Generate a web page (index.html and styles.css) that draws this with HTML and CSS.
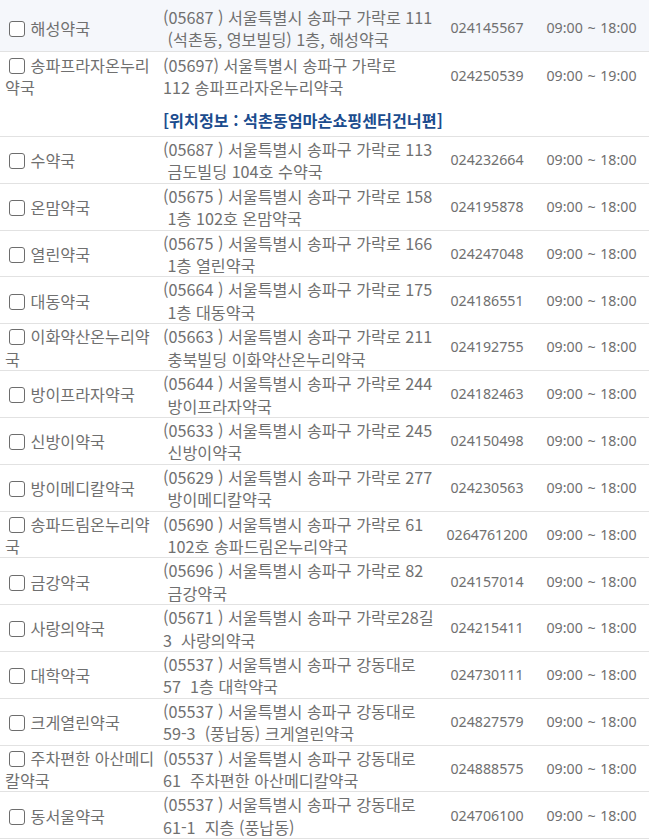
FILE: index.html
```html
<!DOCTYPE html>
<html lang="ko">
<head>
<meta charset="utf-8">
<title>약국 목록</title>
<link rel="stylesheet" href="styles.css">
</head>
<body>
<table class="list">
  <colgroup>
    <col class="c-name"><col class="c-addr"><col class="c-tel"><col class="c-time">
  </colgroup>
  <tbody>
    <tr class="row first">
      <td class="name"><input type="checkbox" class="chk"> 해성약국</td>
      <td class="addr">(05687 ) 서울특별시 송파구 가락로 111<br>&nbsp;(석촌동, 영보빌딩) 1층, 해성약국</td>
      <td class="tel">024145567</td>
      <td class="time">09:00 ~ 18:00</td>
    </tr>
    <tr class="row second">
      <td class="name"><input type="checkbox" class="chk"> 송파프라자온누리<br>약국</td>
      <td class="addr">(05697) 서울특별시 송파구 가락로<br>112 송파프라자온누리약국</td>
      <td class="tel">024250539</td>
      <td class="time">09:00 ~ 19:00</td>
    </tr>
    <tr class="row loc">
      <td></td>
      <td class="locinfo" colspan="3">[위치정보 : 석촌동엄마손쇼핑센터건너편]</td>
    </tr>
    <tr class="row">
      <td class="name"><input type="checkbox" class="chk"> 수약국</td>
      <td class="addr">(05687 ) 서울특별시 송파구 가락로 113<br>&nbsp;금도빌딩 104호 수약국</td>
      <td class="tel">024232664</td>
      <td class="time">09:00 ~ 18:00</td>
    </tr>
    <tr class="row">
      <td class="name"><input type="checkbox" class="chk"> 온맘약국</td>
      <td class="addr">(05675 ) 서울특별시 송파구 가락로 158<br>&nbsp;1층 102호 온맘약국</td>
      <td class="tel">024195878</td>
      <td class="time">09:00 ~ 18:00</td>
    </tr>
    <tr class="row">
      <td class="name"><input type="checkbox" class="chk"> 열린약국</td>
      <td class="addr">(05675 ) 서울특별시 송파구 가락로 166<br>&nbsp;1층 열린약국</td>
      <td class="tel">024247048</td>
      <td class="time">09:00 ~ 18:00</td>
    </tr>
    <tr class="row">
      <td class="name"><input type="checkbox" class="chk"> 대동약국</td>
      <td class="addr">(05664 ) 서울특별시 송파구 가락로 175<br>&nbsp;1층 대동약국</td>
      <td class="tel">024186551</td>
      <td class="time">09:00 ~ 18:00</td>
    </tr>
    <tr class="row">
      <td class="name"><input type="checkbox" class="chk"> 이화약산온누리약<br>국</td>
      <td class="addr">(05663 ) 서울특별시 송파구 가락로 211<br>&nbsp;충북빌딩 이화약산온누리약국</td>
      <td class="tel">024192755</td>
      <td class="time">09:00 ~ 18:00</td>
    </tr>
    <tr class="row">
      <td class="name"><input type="checkbox" class="chk"> 방이프라자약국</td>
      <td class="addr">(05644 ) 서울특별시 송파구 가락로 244<br>&nbsp;방이프라자약국</td>
      <td class="tel">024182463</td>
      <td class="time">09:00 ~ 18:00</td>
    </tr>
    <tr class="row">
      <td class="name"><input type="checkbox" class="chk"> 신방이약국</td>
      <td class="addr">(05633 ) 서울특별시 송파구 가락로 245<br>&nbsp;신방이약국</td>
      <td class="tel">024150498</td>
      <td class="time">09:00 ~ 18:00</td>
    </tr>
    <tr class="row">
      <td class="name"><input type="checkbox" class="chk"> 방이메디칼약국</td>
      <td class="addr">(05629 ) 서울특별시 송파구 가락로 277<br>&nbsp;방이메디칼약국</td>
      <td class="tel">024230563</td>
      <td class="time">09:00 ~ 18:00</td>
    </tr>
    <tr class="row">
      <td class="name"><input type="checkbox" class="chk"> 송파드림온누리약<br>국</td>
      <td class="addr">(05690 ) 서울특별시 송파구 가락로 61<br>&nbsp;102호 송파드림온누리약국</td>
      <td class="tel">0264761200</td>
      <td class="time">09:00 ~ 18:00</td>
    </tr>
    <tr class="row">
      <td class="name"><input type="checkbox" class="chk"> 금강약국</td>
      <td class="addr">(05696 ) 서울특별시 송파구 가락로 82<br>&nbsp;금강약국</td>
      <td class="tel">024157014</td>
      <td class="time">09:00 ~ 18:00</td>
    </tr>
    <tr class="row">
      <td class="name"><input type="checkbox" class="chk"> 사랑의약국</td>
      <td class="addr">(05671 ) 서울특별시 송파구 가락로28길<br>3 &nbsp;사랑의약국</td>
      <td class="tel">024215411</td>
      <td class="time">09:00 ~ 18:00</td>
    </tr>
    <tr class="row">
      <td class="name"><input type="checkbox" class="chk"> 대학약국</td>
      <td class="addr">(05537 ) 서울특별시 송파구 강동대로<br>57 &nbsp;1층 대학약국</td>
      <td class="tel">024730111</td>
      <td class="time">09:00 ~ 18:00</td>
    </tr>
    <tr class="row">
      <td class="name"><input type="checkbox" class="chk"> 크게열린약국</td>
      <td class="addr">(05537 ) 서울특별시 송파구 강동대로<br>59-3 &nbsp;(풍납동) 크게열린약국</td>
      <td class="tel">024827579</td>
      <td class="time">09:00 ~ 18:00</td>
    </tr>
    <tr class="row">
      <td class="name"><input type="checkbox" class="chk"> 주차편한 아산메디<br>칼약국</td>
      <td class="addr">(05537 ) 서울특별시 송파구 강동대로<br>61 &nbsp;주차편한 아산메디칼약국</td>
      <td class="tel">024888575</td>
      <td class="time">09:00 ~ 18:00</td>
    </tr>
    <tr class="row">
      <td class="name"><input type="checkbox" class="chk"> 동서울약국</td>
      <td class="addr">(05537 ) 서울특별시 송파구 강동대로<br>61-1 &nbsp;지층 (풍납동)</td>
      <td class="tel">024706100</td>
      <td class="time">09:00 ~ 18:00</td>
    </tr>
  </tbody>
</table>
</body>
</html>
```

FILE: styles.css
```css
html, body {
  margin: 0;
  padding: 0;
  background: #ffffff;
}

body {
  font-family: "Noto Sans CJK KR", sans-serif;
  font-size: 16.2px;
  color: #707070;
}

.list {
  width: 649px;
  border-collapse: collapse;
  table-layout: fixed;
}

.c-name { width: 160px; }
.c-addr { width: 280px; }
.c-tel { width: 94px; }
.c-time { width: 115px; }

.row td {
  padding: 1px 0 0 0;
  line-height: 22.4px;
  vertical-align: middle;
  border-bottom: 1px solid #e2e2e2;
  white-space: nowrap;
}

.row.first td {
  padding-top: 6px;
  background: #f5f7fb;
}

.row.second td {
  border-bottom: none;
  padding-top: 2px;
}

.row.loc td {
  padding: 10px 0 5px 0;
}

.name {
  padding-left: 5px !important;
}

.addr {
  padding-left: 3px !important;
}

.tel, .time {
  text-align: center;
  font-family: "Noto Sans", "Open Sans", sans-serif;
  font-size: 14.2px;
}

.time {
  word-spacing: 1px;
}

.locinfo {
  padding-left: 3px !important;
  font-weight: bold;
  color: #1b4c8e;
}

.chk {
  -webkit-appearance: none;
  appearance: none;
  width: 16px;
  height: 16px;
  margin: 0 1px 0 4px;
  border: 1.5px solid #6d6d6d;
  border-radius: 3px;
  background: #fff;
  vertical-align: -2px;
}
```
